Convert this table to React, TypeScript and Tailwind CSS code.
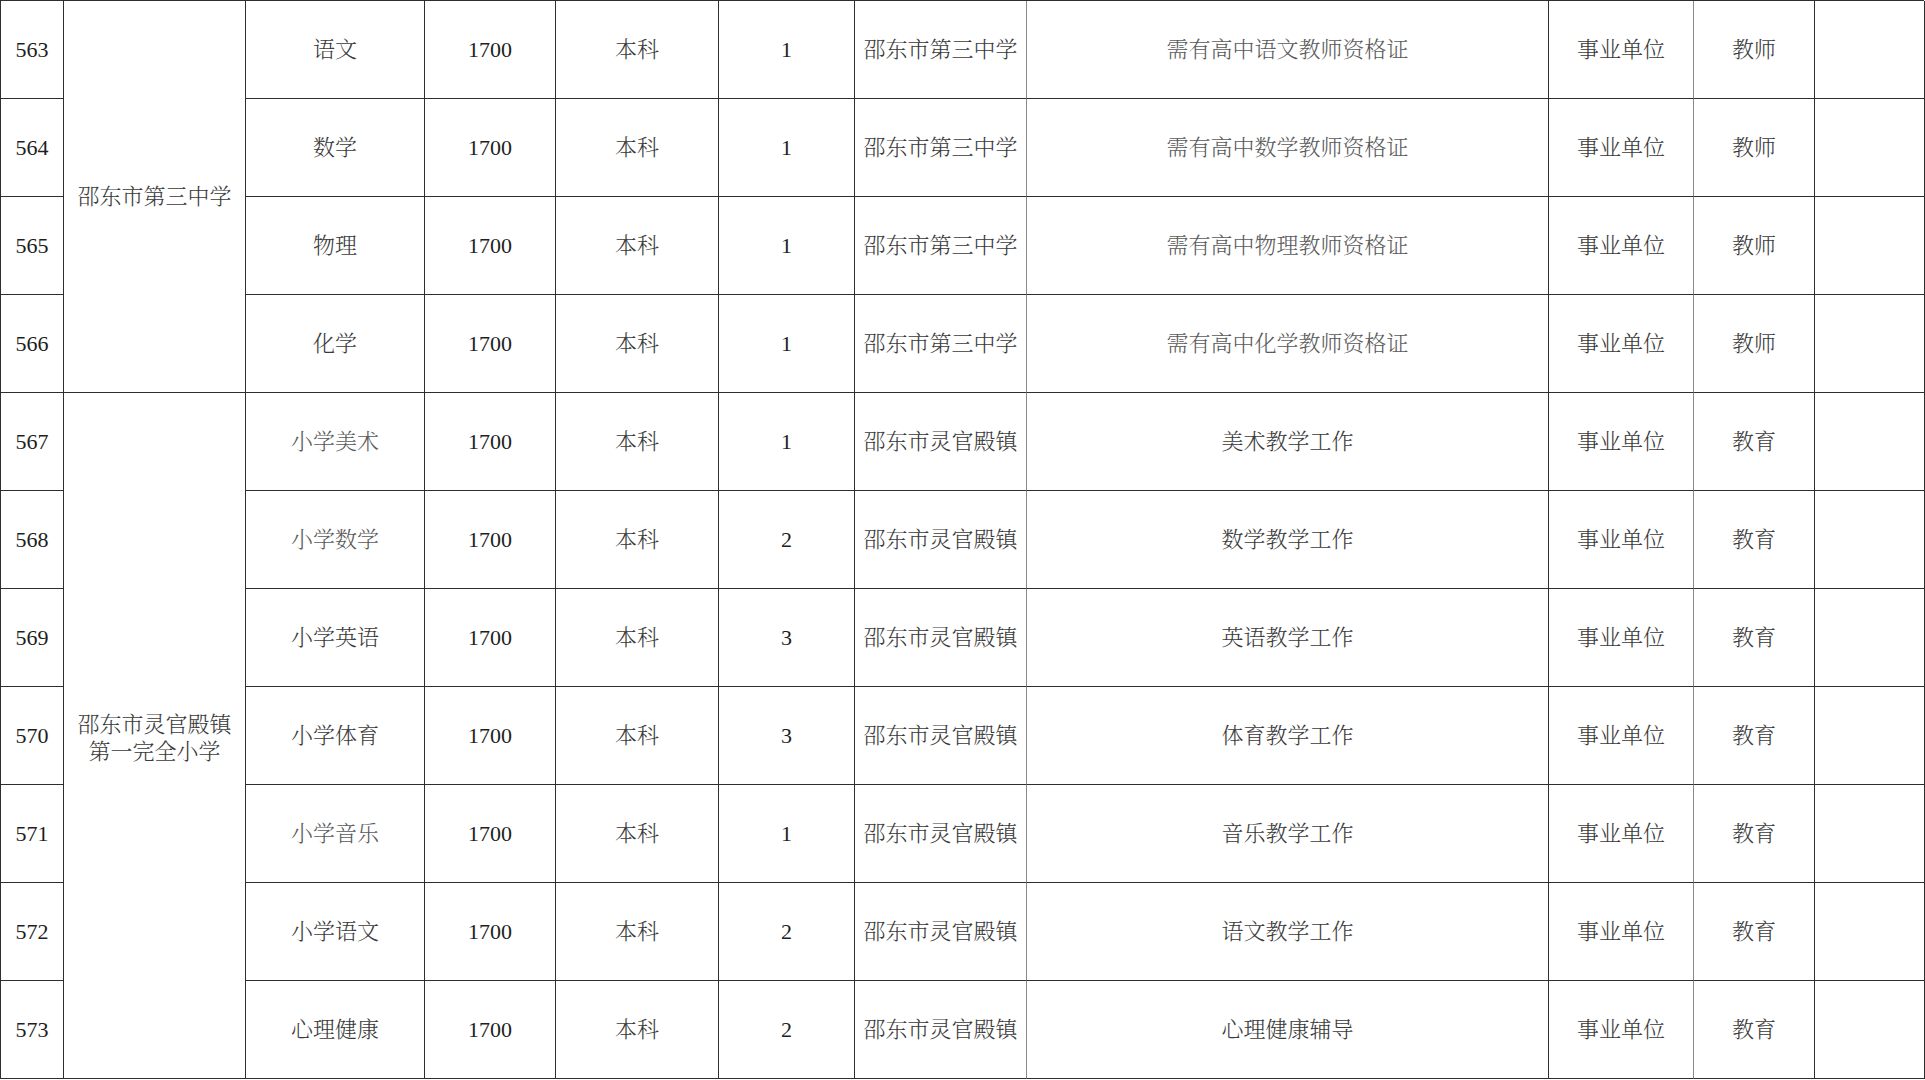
import React from "react";

type Row = {
  no: string;
  subject: string;
  num: string;
  edu: string;
  count: string;
  place: string;
  req: string;
  unit: string;
  kind: string;
  light?: boolean;
  lightReq?: boolean;
};

const rows: Row[] = [
  { no: "563", subject: "语文", num: "1700", edu: "本科", count: "1", place: "邵东市第三中学", req: "需有高中语文教师资格证", unit: "事业单位", kind: "教师", lightReq: true },
  { no: "564", subject: "数学", num: "1700", edu: "本科", count: "1", place: "邵东市第三中学", req: "需有高中数学教师资格证", unit: "事业单位", kind: "教师", lightReq: true },
  { no: "565", subject: "物理", num: "1700", edu: "本科", count: "1", place: "邵东市第三中学", req: "需有高中物理教师资格证", unit: "事业单位", kind: "教师", lightReq: true },
  { no: "566", subject: "化学", num: "1700", edu: "本科", count: "1", place: "邵东市第三中学", req: "需有高中化学教师资格证", unit: "事业单位", kind: "教师", lightReq: true },
  { no: "567", subject: "小学美术", num: "1700", edu: "本科", count: "1", place: "邵东市灵官殿镇", req: "美术教学工作", unit: "事业单位", kind: "教育", light: true },
  { no: "568", subject: "小学数学", num: "1700", edu: "本科", count: "2", place: "邵东市灵官殿镇", req: "数学教学工作", unit: "事业单位", kind: "教育", light: true },
  { no: "569", subject: "小学英语", num: "1700", edu: "本科", count: "3", place: "邵东市灵官殿镇", req: "英语教学工作", unit: "事业单位", kind: "教育" },
  { no: "570", subject: "小学体育", num: "1700", edu: "本科", count: "3", place: "邵东市灵官殿镇", req: "体育教学工作", unit: "事业单位", kind: "教育" },
  { no: "571", subject: "小学音乐", num: "1700", edu: "本科", count: "1", place: "邵东市灵官殿镇", req: "音乐教学工作", unit: "事业单位", kind: "教育", light: true },
  { no: "572", subject: "小学语文", num: "1700", edu: "本科", count: "2", place: "邵东市灵官殿镇", req: "语文教学工作", unit: "事业单位", kind: "教育" },
  { no: "573", subject: "心理健康", num: "1700", edu: "本科", count: "2", place: "邵东市灵官殿镇", req: "心理健康辅导", unit: "事业单位", kind: "教育" },
];

const cell =
  "flex items-center justify-center border-r border-b border-[#2e2e2e] text-center whitespace-nowrap";
const cn = "text-[#3a3a3a] font-light";
const cnLight = "text-[#5a5a5a] font-light";
const num = "text-[#1e1e1e]";

export default function App() {
  return (
    <div className="w-[1925px] h-[1080px] bg-white overflow-hidden font-['Liberation_Serif','Noto_Serif_CJK_SC','Noto_Sans_CJK_SC',serif] text-[22px]">
      <div className="grid grid-cols-[63px_182px_179px_131px_163px_136px_172px_522px_145px_121px_110px] grid-rows-[repeat(11,98px)] w-[1924px] border-l border-t border-[#2e2e2e]">
        {rows.map((r, i) => (
          <React.Fragment key={r.no}>
            <div className={`${cell} ${num}`}>{r.no}</div>
            {i === 0 && (
              <div className={`${cell} ${cn} row-span-4`}>邵东市第三中学</div>
            )}
            {i === 4 && (
              <div className={`${cell} ${cn} row-span-7 leading-[27px] pt-[4px]`}>
                <span>
                  邵东市灵官殿镇
                  <br />
                  第一完全小学
                </span>
              </div>
            )}
            <div className={`${cell} ${r.light ? cnLight : cn}`}>{r.subject}</div>
            <div className={`${cell} ${num}`}>{r.num}</div>
            <div className={`${cell} ${cn}`}>{r.edu}</div>
            <div className={`${cell} ${num}`}>{r.count}</div>
            <div className={`${cell} ${cn} border-r-[#8a8a8a]`}>{r.place}</div>
            <div className={`${cell} ${r.lightReq ? cnLight : cn}`}>{r.req}</div>
            <div className={`${cell} ${cn} border-r-[#8a8a8a]`}>{r.unit}</div>
            <div className={`${cell} ${cn}`}>{r.kind}</div>
            <div className={`${cell}`}></div>
          </React.Fragment>
        ))}
      </div>
    </div>
  );
}
